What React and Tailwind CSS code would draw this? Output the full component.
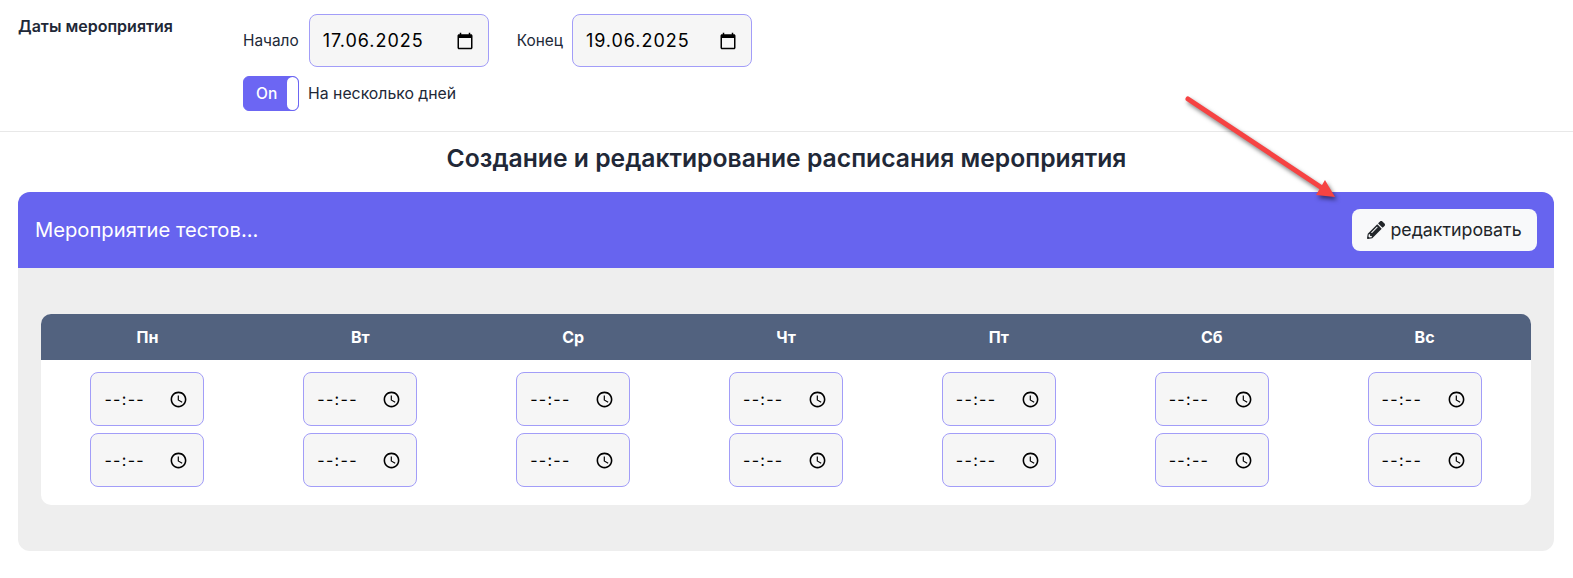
import { FaPencilAlt } from "react-icons/fa"

const days = ["Пн", "Вт", "Ср", "Чт", "Пт", "Сб", "Вс"]

function CalendarIcon() {
  return (
    <svg viewBox="0 0 24 24" className="w-[18px] h-[18px] shrink-0" fill="#000">
      <path d="M20 3h-1V1h-2v2H7V1H5v2H4c-1.1 0-2 .9-2 2v16c0 1.1.9 2 2 2h16c1.1 0 2-.9 2-2V5c0-1.1-.9-2-2-2zm0 18H4V8h16v13z" />
    </svg>
  )
}

function ClockIcon() {
  return (
    <svg viewBox="0 0 24 24" className="w-[19px] h-[19px] shrink-0" fill="#000">
      <path d="M11.99 2C6.47 2 2 6.48 2 12s4.47 10 9.99 10C17.52 22 22 17.52 22 12S17.52 2 11.99 2zM12 20c-4.42 0-8-3.58-8-8s3.58-8 8-8 8 3.58 8 8-3.58 8-8 8zm.5-13H11v6l5.25 3.15.75-1.23-4.5-2.67z" />
    </svg>
  )
}

function DateField({ value }) {
  return (
    <div className="flex items-center justify-between w-[180px] h-[53px] pl-[13px] pr-[14px] rounded-lg border border-[#a29df8] bg-[#f6f6f6]">
      <input
        type="text"
        readOnly
        value={value}
        className="w-[125px] bg-transparent text-[18px] tracking-[0.95px] text-black outline-none"
      />
      <CalendarIcon />
    </div>
  )
}

function TimeField() {
  return (
    <div className="flex items-center justify-between w-[114px] h-[54px] pl-[13px] pr-[15px] rounded-lg border border-[#a29df8] bg-[#f6f6f6]">
      <input
        type="text"
        readOnly
        value="--:--"
        className="w-[50px] bg-transparent text-[16px] tracking-[1.3px] text-black outline-none"
      />
      <ClockIcon />
    </div>
  )
}

function Arrow() {
  return (
    <svg className="absolute left-[1180px] top-[90px] drop-shadow-[2px_3px_2px_rgba(0,0,0,0.5)]" width="170" height="115" viewBox="0 0 170 115">
      <path d="M8 9 L142 98" stroke="#f64343" strokeWidth="5" strokeLinecap="round" fill="none" />
      <path d="M136 105 L145 90 L155 107 Z" fill="#f64343" />
    </svg>
  )
}

export default function App() {
  return (
    <div className="relative min-h-[578px] bg-white text-[#212837] font-['Inter',sans-serif]">
      {/* Dates */}
      <div className="flex h-[132px] px-[18px] pt-[14px] border-b border-[#e8e8e8]">
        <div className="w-[225px] pt-[2px] text-[16px] leading-5 font-semibold">Даты мероприятия</div>
        <div>
          <div className="flex items-center">
            <span className="text-[15.4px] mr-[10px]">Начало</span>
            <DateField value="17.06.2025" />
            <span className="text-[15.4px] ml-[28px] mr-[9px]">Конец</span>
            <DateField value="19.06.2025" />
          </div>
          <div className="flex items-center mt-[9px]">
            <div className="flex items-center justify-between w-[56px] h-[35px] rounded-md bg-[#6c66f3] border border-[#6c66f3]">
              <span className="pl-[12px] text-[15.5px] font-medium text-white">On</span>
              <span className="w-[11px] h-[33px] rounded-md bg-white" />
            </div>
            <span className="ml-[9px] text-[15.8px]">На несколько дней</span>
          </div>
        </div>
      </div>

      <h2 className="mt-[10px] text-center text-[24.7px] leading-[32px] font-semibold">
        Создание и редактирование расписания мероприятия
      </h2>

      {/* Event card */}
      <div className="ml-[18px] mr-[19px] mt-[18px] rounded-xl bg-[#eeeeee] overflow-hidden h-[359px]">
        <div className="flex items-center justify-between h-[76px] pl-[17px] pr-[17px] bg-[#6764ef]">
          <span className="text-[20.2px] text-white">Мероприятие тестов...</span>
          <button className="flex items-center gap-[5px] h-[42px] w-[185px] justify-center rounded-lg bg-[#f8f9fa] text-[17.8px] text-[#212529]">
            <FaPencilAlt className="w-[18px] h-[18px] shrink-0" />
            редактировать
          </button>
        </div>

        <div className="mx-[23px] mt-[46px] rounded-[10px] bg-white overflow-hidden pb-[18px]">
          <div className="grid grid-cols-7 h-[46px] items-center bg-[#52627f]">
            {days.map((day) => (
              <div key={day} className="text-center text-[16px] font-bold text-white">{day}</div>
            ))}
          </div>
          <div className="grid grid-cols-7 mt-[12px]">
            {days.map((day) => (
              <div key={day} className="flex flex-col items-center gap-[7px]">
                <TimeField />
                <TimeField />
              </div>
            ))}
          </div>
        </div>
      </div>

      <Arrow />
    </div>
  )
}
